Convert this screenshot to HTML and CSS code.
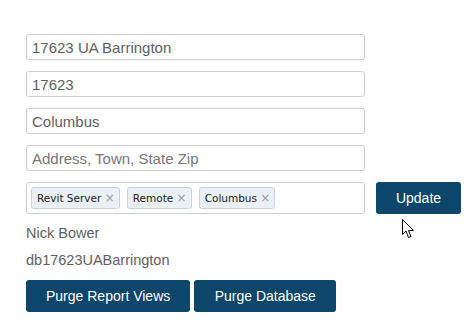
FILE: index.html
```html
<!DOCTYPE html>
<html lang="en">
  <head>
    <meta charset="UTF-8" />
    <meta name="viewport" content="width=device-width, initial-scale=1.0" />
    <title>Office</title>
    <link rel="stylesheet" href="styles.css">
  </head>
  <body>
    <main class="office">
      <input class="field" type="text" value="17623 UA Barrington">
      <input class="field" type="text" value="17623">
      <input class="field" type="text" value="Columbus">
      <input class="field" type="text" placeholder="Address, Town, State Zip">
      <div class="tag-row">
        <ul class="tags">
          <li>Revit Server <span class="x">×</span></li>
          <li>Remote <span class="x">×</span></li>
          <li>Columbus <span class="x">×</span></li>
        </ul>
        <button class="btn">Update</button>
      </div>
      <p class="info">Nick Bower</p>
      <p class="info">db17623UABarrington</p>
      <div class="actions">
        <button class="btn">Purge Report Views</button>
        <button class="btn btn-db">Purge Database</button>
      </div>
      <svg class="cursor" width="13" height="20" viewBox="0 0 13 20">
        <path d="M0.5 0.5 L0.5 15.5 L4 12 L6.5 18.5 L9 17.5 L6.5 11.5 L11.5 11.5 Z" fill="#fff" stroke="#000" stroke-width="1"/>
      </svg>
    </main>
  </body>
</html>
```

FILE: styles.css
```css
* {
  box-sizing: border-box;
}
body {
  margin: 0;
  padding: 0;
  background-color: #fff;
  font-family: "Liberation Sans", Arial, sans-serif;
  color: #5f5f5f;
}
.office {
  position: relative;
  display: flex;
  flex-direction: column;
  align-items: flex-start;
  padding: 34px 0 0 26px;
}
.field {
  width: 339px;
  height: 26px;
  margin: 0 0 11px;
  padding: 0 5px;
  border: 1px solid #ccc;
  border-radius: 3px;
  font-family: inherit;
  font-size: 15px;
  color: #5f5f5f;
  outline: none;
}
.field::placeholder {
  color: #777;
}
.tag-row {
  display: flex;
  gap: 11px;
  margin-bottom: 9px;
}
.tags {
  list-style: none;
  margin: 0;
  padding: 0 4px;
  width: 339px;
  height: 32px;
  border: 1px solid #ccc;
  border-radius: 3px;
  display: flex;
  align-items: center;
  gap: 7px;
}
.tags > li {
  height: 22px;
  padding: 0 4px 0 5px;
  display: flex;
  align-items: center;
  background-color: #ebf0f6;
  border: 1px solid #c8d2de;
  border-radius: 3px;
  font-family: "DejaVu Sans", Verdana, sans-serif;
  font-size: 10.5px;
  color: #222;
  white-space: pre;
}
.tags .x {
  color: #999;
  font-size: 12px;
}
.btn {
  height: 32px;
  padding: 0 20px;
  border: none;
  border-radius: 3px;
  background-color: #0c466b;
  color: #fff;
  font-family: "Liberation Sans", Arial, sans-serif;
  font-size: 14px;
}
.tag-row .btn {
  width: 85px;
  padding: 0;
}
.btn-db {
  width: 142px;
  padding: 0;
}
.info {
  margin: 0 0 7px;
  font-size: 14.5px;
  line-height: 20px;
}
.actions {
  display: flex;
  gap: 4px;
  margin-top: 3px;
}
.cursor {
  position: absolute;
  left: 402px;
  top: 219px;
}
```
